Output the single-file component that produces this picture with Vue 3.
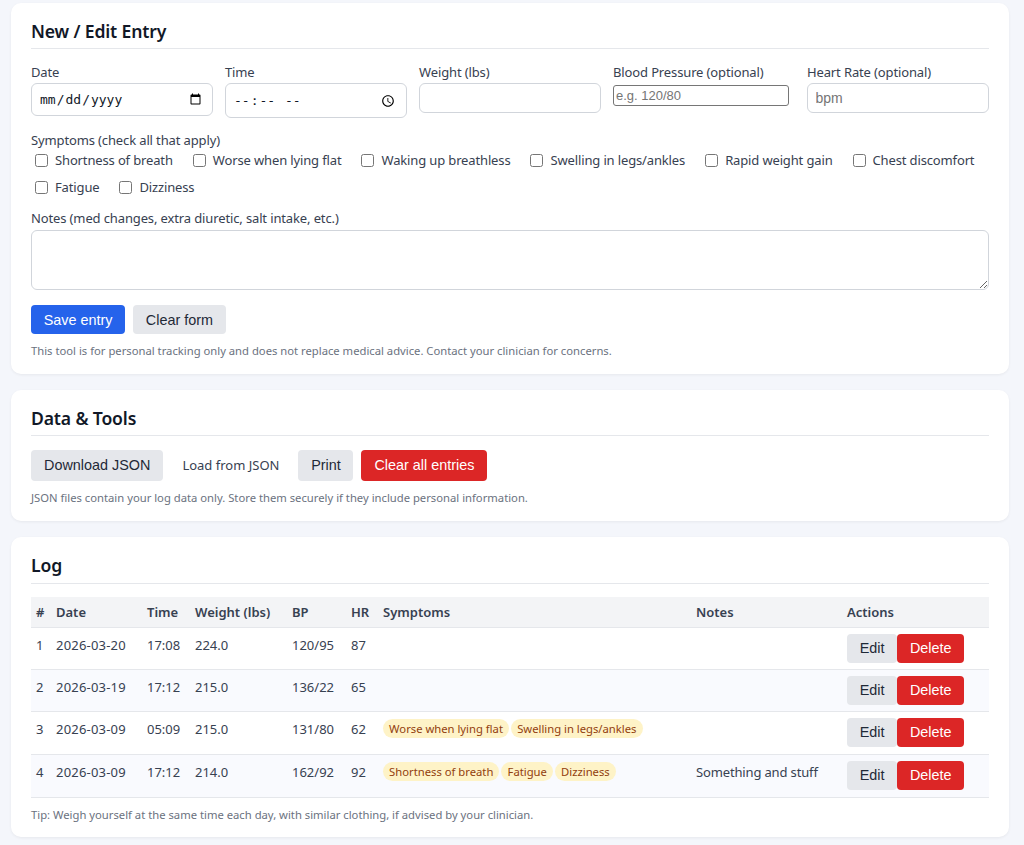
<template>
  <div class="page">
    <section class="card">
      <h2>New / Edit Entry</h2>
      <div class="fields">
        <div class="field">
          <label>Date</label>
          <input class="picker date" type="date" />
        </div>
        <div class="field">
          <label>Time</label>
          <input class="picker time" type="time" />
        </div>
        <div class="field">
          <label>Weight (lbs)</label>
          <input class="text" type="text" />
        </div>
        <div class="field">
          <label>Blood Pressure (optional)</label>
          <input class="plain" type="text" placeholder="e.g. 120/80" />
        </div>
        <div class="field">
          <label>Heart Rate (optional)</label>
          <input class="text" type="text" placeholder="bpm" />
        </div>
      </div>

      <div class="symptoms">
        <label>Symptoms (check all that apply)</label>
        <div class="checks">
          <label v-for="s in symptoms" :key="s" class="check">
            <input type="checkbox" />
            <span>{{ s }}</span>
          </label>
        </div>
      </div>

      <div class="notes">
        <label>Notes (med changes, extra diuretic, salt intake, etc.)</label>
        <textarea></textarea>
      </div>

      <div class="buttons">
        <button class="btn primary">Save entry</button>
        <button class="btn grey">Clear form</button>
      </div>
      <p class="small">This tool is for personal tracking only and does not replace medical advice. Contact your clinician for concerns.</p>
    </section>

    <section class="card">
      <h2>Data &amp; Tools</h2>
      <div class="buttons tools">
        <button class="btn grey wide">Download JSON</button>
        <span class="load">Load from JSON</span>
        <button class="btn grey">Print</button>
        <button class="btn red wide">Clear all entries</button>
      </div>
      <p class="small tools-note">JSON files contain your log data only. Store them securely if they include personal information.</p>
    </section>

    <section class="card log">
      <h2>Log</h2>
      <table>
        <thead>
          <tr>
            <th v-for="c in columns" :key="c.name" :style="{ width: c.width + 'px' }">{{ c.name }}</th>
          </tr>
        </thead>
        <tbody>
          <tr v-for="(row, index) in rows" :key="index" :class="{ tall: row.tags.length }">
            <td>{{ index + 1 }}</td>
            <td class="day">{{ row.date }}</td>
            <td>{{ row.time }}</td>
            <td>{{ row.weight }}</td>
            <td>{{ row.bp }}</td>
            <td>{{ row.hr }}</td>
            <td class="chips">
              <span v-for="t in row.tags" :key="t" class="chip">{{ t }}</span>
            </td>
            <td class="note">{{ row.notes }}</td>
            <td class="actions"><button class="btn grey">Edit</button><button class="btn red">Delete</button></td>
          </tr>
        </tbody>
      </table>
      <p class="small tip">Tip: Weigh yourself at the same time each day, with similar clothing, if advised by your clinician.</p>
    </section>
  </div>
</template>

<script setup>
const symptoms = [
  'Shortness of breath',
  'Worse when lying flat',
  'Waking up breathless',
  'Swelling in legs/ankles',
  'Rapid weight gain',
  'Chest discomfort',
  'Fatigue',
  'Dizziness',
]

const columns = [
  { name: '#', width: 20 },
  { name: 'Date', width: 91 },
  { name: 'Time', width: 48 },
  { name: 'Weight (lbs)', width: 97 },
  { name: 'BP', width: 59 },
  { name: 'HR', width: 32 },
  { name: 'Symptoms', width: 313 },
  { name: 'Notes', width: 151 },
  { name: 'Actions', width: 147 },
]

const rows = [
  { date: '2026-03-20', time: '17:08', weight: '224.0', bp: '120/95', hr: '87', tags: [], notes: '' },
  { date: '2026-03-19', time: '17:12', weight: '215.0', bp: '136/22', hr: '65', tags: [], notes: '' },
  { date: '2026-03-09', time: '05:09', weight: '215.0', bp: '131/80', hr: '62', tags: ['Worse when lying flat', 'Swelling in legs/ankles'], notes: '' },
  { date: '2026-03-09', time: '17:12', weight: '214.0', bp: '162/92', hr: '92', tags: ['Shortness of breath', 'Fatigue', 'Dizziness'], notes: 'Something and stuff' },
]
</script>

<style>
html,
body {
  margin: 0;
  background: #f4f6fb;
}
</style>

<style scoped>
.page {
  display: flex;
  flex-direction: column;
  gap: 16px;
  padding: 3.3px 15px 7px 11px;
  font-family: "Noto Sans", sans-serif;
  font-size: 13px;
  color: #374151;
}
.card {
  background: #fff;
  border-radius: 10px;
  padding: 16px 20px 15.5px;
  box-shadow: 0 1px 3px rgba(0, 0, 0, 0.06);
}
h2 {
  margin: 0 0 14px;
  padding-bottom: 4px;
  font-size: 17.6px;
  line-height: 25px;
  font-weight: 600;
  letter-spacing: -0.15px;
  color: #111827;
  border-bottom: 1px solid #e5e7eb;
}
.log h2 {
  padding-bottom: 5px;
  margin-bottom: 13px;
}
label {
  line-height: 18px;
  letter-spacing: -0.13px;
}
.fields {
  display: grid;
  grid-template-columns: repeat(5, 1fr);
  gap: 12px;
  align-items: start;
}
.field {
  display: flex;
  flex-direction: column;
  gap: 2px;
}
.picker,
.text,
textarea {
  box-sizing: border-box;
  width: 100%;
  border: 1px solid #d1d5db;
  border-radius: 6px;
  background: #fff;
  color: #111827;
}
.picker {
  font-family: "DejaVu Sans Mono", monospace;
  font-size: 13px;
  padding: 0 8.5px 0 7px;
}
.date {
  height: 33px;
}
.time {
  height: 35px;
}
.text {
  height: 30px;
  padding: 0 7.5px;
  font-family: "Liberation Sans", sans-serif;
  font-size: 14px;
}
.plain {
  box-sizing: border-box;
  width: 176px;
  height: 21px;
  margin-top: 2px;
  padding: 1px 2px;
  font-family: "Liberation Sans", sans-serif;
  font-size: 13px;
  border: 1px solid #767676;
  border-radius: 3px;
}
.symptoms {
  margin-top: 13px;
}
.checks {
  display: flex;
  flex-wrap: wrap;
  gap: 5px 16px;
}
.check {
  display: flex;
  align-items: center;
  gap: 4px;
  height: 22px;
  letter-spacing: -0.14px;
}
.check input {
  margin: 0 3px 0 4px;
}
.notes {
  display: flex;
  flex-direction: column;
  gap: 3px;
  margin-top: 11px;
}
textarea {
  height: 60px;
  display: block;
}
.buttons {
  display: flex;
  gap: 8px;
  margin-top: 15px;
}
.btn {
  height: 29px;
  padding: 0 12.7px;
  border: none;
  border-radius: 4px;
  font-family: "Liberation Sans", sans-serif;
  font-size: 14.4px;
}
.primary {
  background: #2563eb;
  color: #fff;
}
.grey {
  background: #e5e7eb;
  color: #1f2937;
}
.red {
  background: #dc2626;
  color: #fff;
}
.small {
  margin: 9px 0 0;
  font-size: 11.25px;
  line-height: 15px;
  color: #6b7280;
}
.tools {
  margin-top: 0;
}
.tools .btn {
  height: 31px;
}
.tools .wide {
  padding: 0 13px;
}
.load {
  padding: 0 11px;
  line-height: 31px;
}
.tools-note {
  margin-top: 9.5px;
}
table {
  width: 100%;
  table-layout: fixed;
  border-collapse: collapse;
}
th {
  box-sizing: border-box;
  text-align: left;
  font-weight: 600;
  padding: 6px 5px;
  height: 30px;
  line-height: 18px;
  background: #f3f4f6;
  border-bottom: 1px solid #e5e7eb;
}
td {
  vertical-align: top;
  padding: 8px 5px;
  height: 41.5px;
  box-sizing: border-box;
  border-bottom: 1px solid #e5e7eb;
  line-height: 18px;
}
.tall td {
  height: 43px;
}
tbody tr:nth-child(even) {
  background: #f9fafe;
}
.day {
  letter-spacing: 0.2px;
}
.note {
  letter-spacing: -0.15px;
}
.actions {
  padding: 6px 5px;
}
.chips {
  padding-top: 7px;
}
.chip {
  display: inline-block;
  margin-right: 2px;
  padding: 0 6.1px;
  height: 19px;
  line-height: 19px;
  border-radius: 999px;
  background: #fef3c7;
  color: #92400e;
  font-size: 11.25px;
}
.tip {
  margin-top: 9px;
}
</style>
